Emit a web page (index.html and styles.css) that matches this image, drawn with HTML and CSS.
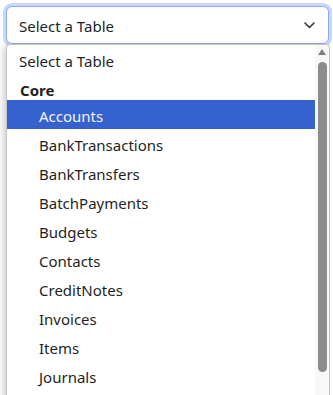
FILE: index.html
```html
<!DOCTYPE html>
<html>
<head>
  <title>Select a Table</title>
  <link rel="stylesheet" href="styles.css">
</head>
<body>

<div class="picker">
  <div class="select">
    <span>Select a Table</span>
    <svg class="chevron" width="11" height="7" viewBox="0 0 11 7">
      <path d="M1 1l4.5 4.5L10 1" fill="none" stroke="#343a40" stroke-width="1.6" stroke-linecap="round" stroke-linejoin="round"/>
    </svg>
  </div>
  <div class="dropdown">
    <div class="options">
      <div class="option first">Select a Table</div>
      <div class="group">Core</div>
      <div class="option sub selected">Accounts</div>
      <div class="option sub">BankTransactions</div>
      <div class="option sub">BankTransfers</div>
      <div class="option sub">BatchPayments</div>
      <div class="option sub">Budgets</div>
      <div class="option sub">Contacts</div>
      <div class="option sub">CreditNotes</div>
      <div class="option sub">Invoices</div>
      <div class="option sub">Items</div>
      <div class="option sub">Journals</div>
    </div>
    <div class="scrollbar">
      <span class="arrow"></span>
      <span class="thumb"></span>
    </div>
  </div>
</div>

</body>
</html>
```

FILE: styles.css
```css
html, body {
  margin: 0;
  height: 395px;
  overflow: hidden;
  background: #fff;
}
body {
  font-family: "Noto Sans", sans-serif;
  font-size: 15px;
  color: #212529;
}
.picker {
  padding: 6px 4px 0 6px;
}
.select {
  box-sizing: border-box;
  height: 38px;
  display: flex;
  align-items: center;
  justify-content: space-between;
  padding: 1px 13px 0 12px;
  border: 1px solid #8eabf1;
  border-radius: 6px;
  box-shadow: 0 0 0 3px #c9d7fa;
  background: #fff;
}
.chevron {
  display: block;
}
.dropdown {
  display: flex;
  width: 324px;
  height: 360px;
  box-sizing: border-box;
  border: 1px solid #c4c4c4;
  border-bottom: none;
  border-radius: 4px 4px 0 0;
  background: #fff;
  box-shadow: -3px 2px 6px rgba(0, 0, 0, 0.18);
  overflow: hidden;
}
.options {
  flex: 1;
}
.option, .group {
  box-sizing: border-box;
  height: 29px;
  padding-top: 3px;
  line-height: 26px;
  padding-left: 12px;
  color: #1f1f1f;
  white-space: nowrap;
}
.option.first {
  height: 27px;
}
.group {
  height: 28px;
  padding-top: 5px;
  font-weight: bold;
  padding-left: 13px;
}
.option.sub {
  padding-left: 32px;
}
.option.selected {
  background: #3662d0;
  color: #f4f4ff;
}
.scrollbar {
  width: 14px;
  background: #f8f8f8;
  display: flex;
  flex-direction: column;
  align-items: center;
  padding-top: 4px;
}
.arrow {
  width: 0;
  height: 0;
  border-left: 4.5px solid transparent;
  border-right: 4.5px solid transparent;
  border-bottom: 6px solid #7c7c7c;
}
.thumb {
  margin-top: 7px;
  width: 9px;
  height: 310px;
  border-radius: 5px;
  background: #8c8c8c;
}
```
